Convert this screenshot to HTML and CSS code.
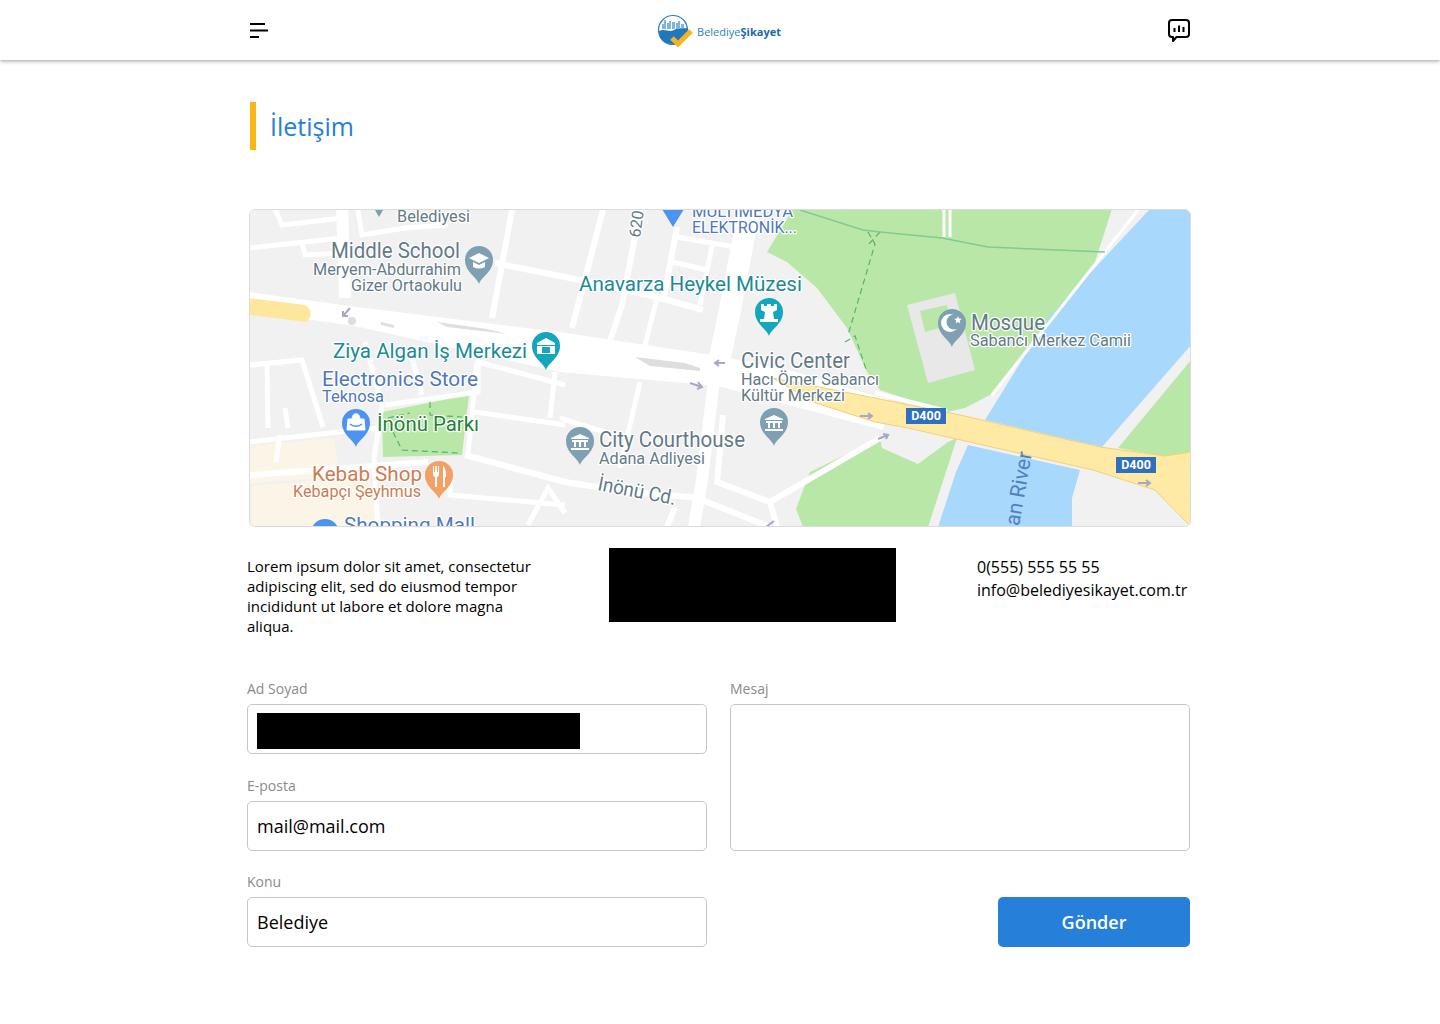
FILE: index.html
```html
<!DOCTYPE html>
<html lang="en">

<head>
    <meta charset="UTF-8">
    <meta name="viewport" content="width=device-width, initial-scale=1.0">
    <title>İletişim</title>
    <link rel="stylesheet" href="styles.css">
</head>

<body>
    <header class="topbar">
        <div class="topbar-inner">
            <svg class="burger" width="18" height="16" viewBox="0 0 18 16">
                <path d="M0 2h15M0 8.500h18M0 15h9" stroke="#000" stroke-width="2" fill="none" />
            </svg>
            <div class="logo">
                <svg width="36" height="34" viewBox="0 0 36 34">
                    <circle cx="15" cy="16" r="14.500" fill="#fff" stroke="#2a7fc1" stroke-width="1.200" />
                    <path d="M1 17c6-3 10 2 15-1s8-1 13-2c1 9-5 16-14 16S1 25 1 17z" fill="#2177bd" />
                    <path d="M4 15v-5h2V6h2v9zM9 15V9h2V7h2v8zM14 15V8h3v7zM18 15V9h2V7h2v8zM23 14v-4h3v4z" fill="#7db5dd" />
                    <path d="M14 24l6 6L33 17" fill="none" stroke="#f7b51d" stroke-width="5" />
                </svg>
                <span class="logo-text">Belediye<b>Şikayet</b></span>
            </div>
            <svg class="chat" width="24" height="24" viewBox="0 0 24 24">
                <path d="M5 2h14a3 3 0 0 1 3 3v11a3 3 0 0 1-3 3H9.500L6 23v-4H5a3 3 0 0 1-3-3V5a3 3 0 0 1 3-3z" fill="none" stroke="#000" stroke-width="2" stroke-linejoin="round" />
                <path d="M7.500 10v4M12 7.500V14M16.500 9v5" stroke="#000" stroke-width="2" fill="none" />
            </svg>
        </div>
    </header>

    <main class="container">
        <h1 class="page-title">İletişim</h1>

        <div class="map-box">
            <svg class="map" width="940" height="316" viewBox="250 210 940 316">
                <defs>
                    <path id="pin" d="M0 24C-2 17-14 12-14 0A14 14 0 1 1 14 0C14 12 2 17 0 24z" />
                </defs>
                <rect x="249" y="209" width="942" height="318" fill="#f1f1f1" />

                <!-- beige blocks -->
                <path d="M249 446l85-8 6 38-91 8zM252 486l118-10 8 51H252z" fill="#fbf5e8" />

                <!-- green and water -->
                <path d="M793 209h319l-17 53-105 133-25 13-18 4-67-22-13-18-20-44-30-40-30-26-20-10z" fill="#b9e7a7" />
                <path d="M957 438l-29 89H803l-7-18 14-37 70-34 2 10 36 16 30-22z" fill="#b9e7a7" />
                <path d="M1191 360l-73 88 49 9 24-5z" fill="#b9e7a7" />
                <path d="M382 412l87-17-7 60-79 2z" fill="#b9e7a7" />
                <path d="M1150 209h41v136l-89 102-117-27 63-102z" fill="#a8d8fc" />
                <path d="M968 445l112 25-8 28v29H938l18-55z" fill="#a8d8fc" />

                <!-- mosque yard -->
                <path d="M907 305l48-12 20 77-47 13z" fill="#e8e8e8" />
                <path d="M920 311l27-6 3 20-25 7z" fill="#b9e7a7" />

                <!-- streets -->
                <g fill="none" stroke="#fff" stroke-width="5">
                    <path d="M275 209l7 16 60-7M250 248l92-10M302 243l3 12 37-2M358 210l4 25 43-7 43-3" />
                    <path stroke-width="12" d="M342 205l3 93" />
                    <path stroke-width="6" d="M512 210l-20 108M495 263l70 14 92 20 46 13" />
                    <path d="M250 365l52-5 21 67M267 365l1 63M285 408l3 20M250 442l88-10 42-4" />
                    <path d="M365 342l17 63-8 53 4 69M412 358l10 37M385 405l93-13v-30l87 23M475 412l90 13" />
                    <path stroke-width="6" d="M465 455l100 27 65 10 70 6M250 475l178-13" />
                    <path d="M477 362l-9 93M555 372l-5 46M450 472v23l115 10M280 435l-4 27M528 525l20-37 17 25" />
                    <path stroke-width="6" d="M603 210l-31 118M640 210l-18 95-15 45M677 227l-14 75" />
                    <path d="M677 237l63 11M713 242l-13 63M672 262l35 8M657 298l-12 47M640 382l-20 86M560 418l63 20" />
                    <path stroke-width="22" d="M750 205l-20 105-15 70" />
                    <path stroke-width="12" d="M714 380l-12 100-8 47" />
                    <path stroke-width="6" d="M723 415l-6 67 53 20 110-64M770 502l7 25M697 498l73 29M675 508l-8 19" />
                    <path stroke-width="3" d="M1138 210L992 395M944 209v28M950 209v28" />
                    <path stroke-width="4" d="M875 393l72 18" />
                </g>
                <path d="M249 292l100 14 210 26 160 24 70 14 100 30-6 30-165-44-158-14-205-46-106-15z" fill="#fff" />
                <path d="M635 357l50 6 15 5v3l-50-5zM437 322l50 7 20 5-60-7zM381 322l13 3v3l-13-3z" fill="#dedede" />
                <circle cx="352" cy="321" r="4" fill="#dedede" />

                <!-- highway -->
                <path d="M249 298l56 7c7 3 7 14 1 17l-57-7z" fill="#fde79d" />
                <path d="M773 378l102 20 85 17 140 32 65 9 26-4v75l-36-37-62-20-185-42-33-6-62-20z" fill="#feeaa5" stroke="#f5cf77" stroke-width="1" />

                <!-- footpaths -->
                <g fill="none" stroke="#57b368" stroke-width="1.200" stroke-dasharray="6 4">
                    <path d="M430 402v13l32 2M388 418l22-5M393 432l9 18 56 3M868 232l7 12-27 91M880 232l-12 13M845 342l10-6 12 36" />
                </g>
                <path d="M800 210l63 20 17 2 62 6 46 9 117 5" fill="none" stroke="#7fcb93" stroke-width="1.500" />

                <!-- arrows -->
                <g fill="none" stroke="#a8a8c4" stroke-width="2">
                    <path d="M350 308l-7 8m0-5v5h5M725 363h-10m4-3l-4 3 4 3M690 383l12 4m-4-5l4 5-5 2" />
                    <path d="M860 416h12m-4-3l4 3-4 3M878 439l10-4m-5-1l5 1-2 4M1138 483h12m-4-3l4 3-4 3M766 527l8-6" />
                </g>

                <!-- pins -->
                <use href="#pin" x="479" y="260" fill="#7fa0b3" />
                <use href="#pin" x="546" y="346" fill="#14a6bd" />
                <use href="#pin" x="356" y="423" fill="#4c94ef" />
                <use href="#pin" x="439" y="475" fill="#f3a064" />
                <use href="#pin" x="325" y="533" fill="#4c94ef" />
                <use href="#pin" x="769" y="312" fill="#14a6bd" />
                <use href="#pin" x="774" y="422" fill="#7fa0b3" />
                <use href="#pin" x="580" y="441" fill="#7fa0b3" />
                <use href="#pin" x="952" y="323" fill="#7fa0b3" />
                <path d="M662 209h22l-11 18z" fill="#4c94ef" />
                <path d="M375 210h8l-4 7z" fill="#7fa0b3" />

                <!-- pin glyphs -->
                <path d="M469 258l10-5 10 5-10 5zM473 262v5c4 2 8 2 12 0v-5l-6 3z" fill="#fff" />
                <path d="M537 343l9-5 9 5v2h-18zM537 346h18v8h-18z" fill="#fff" />
                <rect x="542" y="347" width="8" height="6" fill="#14a6bd" />
                <path d="M348 419h16l1 11h-18zM352 419c0-7 8-7 8 0" fill="#fff" stroke="#fff" stroke-width="1" />
                <path d="M350 424c3 3 9 3 12 0" stroke="#4c94ef" stroke-width="1.500" fill="none" />
                <path d="M433 466v8c0 2 1 3 2 3v10h2v-10c1 0 2-1 2-3v-8h-1v6h-1v-6h-2v6h-1v-6zM443 466c2 1 3 5 3 9v2h-1v10h-2z" fill="#fff" />
                <path d="M761 304v6l4 2-1 7h10l-1-7 4-2v-6h-3v2h-3v-2h-4v2h-3v-2zM760 319h18v3h-18z" fill="#fff" />
                <path d="M765 419l9-4 9 4v1h-18zM766 421h16v2h-16zM768 423h2v5h-2zM773 423h2v5h-2zM778 423h2v5h-2zM765 429h18v2h-18z" fill="#fff" />
                <path d="M571 438l9-4 9 4v1h-18zM572 440h16v2h-16zM574 442h2v5h-2zM579 442h2v5h-2zM584 442h2v5h-2zM571 448h18v2h-18z" fill="#fff" />
                <circle cx="950" cy="323" r="9" fill="#fff" />
                <circle cx="954" cy="322" r="7.500" fill="#7fa0b3" />
                <path d="M958 316l1 2.500 2.700.3-2 1.900.6 2.700-2.300-1.400-2.300 1.400.6-2.700-2-1.900 2.700-.3z" fill="#fff" />

                <!-- labels -->
                <g class="map-text">
                    <text class="t-gray" x="397" y="222" font-size="16" textLength="73" lengthAdjust="spacingAndGlyphs">Belediyesi</text>
                    <text class="t-gray" x="331" y="258" font-size="22" textLength="129" lengthAdjust="spacingAndGlyphs">Middle School</text>
                    <text class="t-gray" x="313" y="275" font-size="16" textLength="148" lengthAdjust="spacingAndGlyphs">Meryem-Abdurrahim</text>
                    <text class="t-gray" x="351" y="291" font-size="16" textLength="111" lengthAdjust="spacingAndGlyphs">Gizer Ortaokulu</text>
                    <text class="t-teal" x="579" y="291" font-size="21" textLength="223" lengthAdjust="spacingAndGlyphs">Anavarza Heykel Müzesi</text>
                    <text class="t-gray" font-size="16" transform="translate(640 238) rotate(-82)">6200</text>
                    <text class="t-blue" x="692" y="217" font-size="17" textLength="101" lengthAdjust="spacingAndGlyphs">MULTİMEDYA</text>
                    <text class="t-blue" x="692" y="233" font-size="17" textLength="105" lengthAdjust="spacingAndGlyphs">ELEKTRONİK...</text>
                    <text class="t-teal" x="333" y="358" font-size="21" textLength="194" lengthAdjust="spacingAndGlyphs">Ziya Algan İş Merkezi</text>
                    <text class="t-blue" x="322" y="386" font-size="21" textLength="156" lengthAdjust="spacingAndGlyphs">Electronics Store</text>
                    <text class="t-blue" x="322" y="402" font-size="16" textLength="62" lengthAdjust="spacingAndGlyphs">Teknosa</text>
                    <text class="t-green" x="377" y="431" font-size="20" textLength="102" lengthAdjust="spacingAndGlyphs">İnönü Parkı</text>
                    <text class="t-orange" x="312" y="481" font-size="21" textLength="110" lengthAdjust="spacingAndGlyphs">Kebab Shop</text>
                    <text class="t-orange" x="293" y="497" font-size="16" textLength="128" lengthAdjust="spacingAndGlyphs">Kebapçı Şeyhmus</text>
                    <text class="t-blue" x="344" y="532" font-size="21" textLength="131" lengthAdjust="spacingAndGlyphs">Shopping Mall</text>
                    <text class="t-gray" x="599" y="447" font-size="22" textLength="146" lengthAdjust="spacingAndGlyphs">City Courthouse</text>
                    <text class="t-gray" x="599" y="464" font-size="16" textLength="106" lengthAdjust="spacingAndGlyphs">Adana Adliyesi</text>
                    <text class="t-gray" font-size="20" transform="translate(597 490) rotate(11)" textLength="79" lengthAdjust="spacingAndGlyphs">İnönü Cd.</text>
                    <text class="t-gray" x="741" y="368" font-size="22" textLength="109" lengthAdjust="spacingAndGlyphs">Civic Center</text>
                    <text class="t-gray" x="741" y="385" font-size="16" textLength="138" lengthAdjust="spacingAndGlyphs">Hacı Ömer Sabancı</text>
                    <text class="t-gray" x="741" y="401" font-size="16" textLength="104" lengthAdjust="spacingAndGlyphs">Kültür Merkezi</text>
                    <text class="t-gray" x="971" y="330" font-size="22" textLength="74" lengthAdjust="spacingAndGlyphs">Mosque</text>
                    <text class="t-gray" x="970" y="346" font-size="16" textLength="161" lengthAdjust="spacingAndGlyphs">Sabancı Merkez Camii</text>
                </g>
                <text class="t-river" font-size="21" text-anchor="end" transform="translate(1032 453) rotate(-80)">Seyhan River</text>

                <!-- road shields -->
                <rect x="906" y="408" width="40" height="16" fill="#2f6fbf" />
                <rect x="1116" y="457" width="40" height="16" fill="#2f6fbf" />
                <text class="t-shield" x="926" y="420" font-size="12.500" text-anchor="middle">D400</text>
                <text class="t-shield" x="1136" y="469" font-size="12.500" text-anchor="middle">D400</text>
            </svg>
        </div>

        <section class="info">
            <p class="info-text">Lorem ipsum dolor sit amet, consectetur adipiscing elit, sed do eiusmod tempor incididunt ut labore et dolore magna aliqua.</p>
            <div class="black-box"></div>
            <div class="info-contact">
                <div>0(555) 555 55 55</div>
                <div>info@belediyesikayet.com.tr</div>
            </div>
        </section>

        <form class="contact-form">
            <div class="form-col">
                <div class="field">
                    <label>Ad Soyad</label>
                    <div class="input input-hidden"><span class="black-line"></span></div>
                </div>
                <div class="field">
                    <label for="mail">E-posta</label>
                    <input class="input" type="text" id="mail" value="mail@mail.com">
                </div>
                <div class="field field-last">
                    <label for="subject">Konu</label>
                    <input class="input" type="text" id="subject" value="Belediye">
                </div>
            </div>
            <div class="form-col">
                <div class="field">
                    <label for="message">Mesaj</label>
                    <textarea class="input message" id="message"></textarea>
                </div>
                <button class="send" type="submit">Gönder</button>
            </div>
        </form>
    </main>
</body>

</html>
```

FILE: styles.css
```css
body {
    font-family: 'Open Sans', 'Noto Sans', sans-serif;
    margin: 0;
    padding: 0;
    background-color: #fff;
    color: #000;
}

/* Top bar */
.topbar {
    height: 60px;
    background-color: #fff;
    box-shadow: 0 1px 4px rgba(0, 0, 0, 0.4);
}

.topbar-inner {
    width: 940px;
    height: 100%;
    margin: 0 auto;
    display: flex;
    align-items: center;
    justify-content: space-between;
}

.burger {
    display: block;
}

.chat {
    display: block;
    margin-right: -1px;
}

.logo {
    display: flex;
    align-items: center;
    margin-top: 2px;
    margin-left: 4px;
}

.logo-text {
    font-size: 11px;
    color: #2f7fc1;
    letter-spacing: 0;
    margin-left: 3px;
}

.logo-text b {
    color: #1c6aa8;
}

/* Page */
.container {
    width: 946px;
    margin: 0 auto;
}

.page-title {
    margin: 42px 0 59px 3px;
    height: 48px;
    line-height: 48px;
    padding-left: 14px;
    border-left: 6px solid #fdb515;
    font-size: 25px;
    font-weight: 400;
    color: #2680d4;
}

.map-box {
    margin: 0 2px;
    height: 316px;
    border: 1px solid #dcdcdc;
    border-radius: 6px;
    overflow: hidden;
}

.map {
    display: block;
}

.map-text text {
    paint-order: stroke;
    stroke: #fff;
    stroke-width: 2.5px;
    stroke-linejoin: round;
}

.map text {
    font-family: Roboto, 'Liberation Sans', sans-serif;
}

.t-gray {
    fill: #637a87;
}

.t-teal {
    fill: #1b8a97;
}

.t-blue {
    fill: #4f79b9;
}

.t-green {
    fill: #1f8236;
}

.t-orange {
    fill: #c97d52;
}

.t-river {
    fill: #5282bd;
}

.t-shield {
    fill: #fff;
    font-weight: 700;
}

/* Info row */
.info {
    display: grid;
    grid-template-columns: 362px 287px auto;
    margin-top: 21px;
}

.info-text {
    width: 290px;
    margin: 8px 0 0;
    font-size: 15px;
    line-height: 20px;
}

.black-box {
    height: 74px;
    background-color: #000;
}

.info-contact {
    padding: 8px 0 0 81px;
    font-size: 16px;
    line-height: 23px;
    white-space: nowrap;
}

/* Form */
.contact-form {
    display: grid;
    grid-template-columns: 460px 460px;
    column-gap: 23px;
    margin-top: 43px;
    padding-bottom: 77px;
}

.form-col {
    display: flex;
    flex-direction: column;
}

.field + .field {
    margin-top: 22px;
}

.field + .field-last {
    margin-top: 21px;
}

.field label {
    display: block;
    height: 20px;
    line-height: 20px;
    margin-bottom: 5px;
    font-size: 14px;
    color: #8a8a8a;
}

.input {
    display: block;
    box-sizing: border-box;
    width: 100%;
    height: 50px;
    padding: 0 9px;
    border: 1px solid #c6c6c6;
    border-radius: 5px;
    background-color: #fff;
    font-family: inherit;
    font-size: 18px;
    color: #000;
}

.input-hidden {
    display: flex;
    align-items: center;
}

.black-line {
    width: 323px;
    height: 36px;
    margin-top: 4px;
    background-color: #000;
}

.message {
    height: 147px;
    resize: none;
}

.send {
    width: 192px;
    height: 50px;
    margin-top: auto;
    align-self: flex-end;
    border: none;
    border-radius: 5px;
    background-color: #2680d9;
    font-family: inherit;
    font-size: 18px;
    font-weight: 600;
    color: #fff;
}
```
